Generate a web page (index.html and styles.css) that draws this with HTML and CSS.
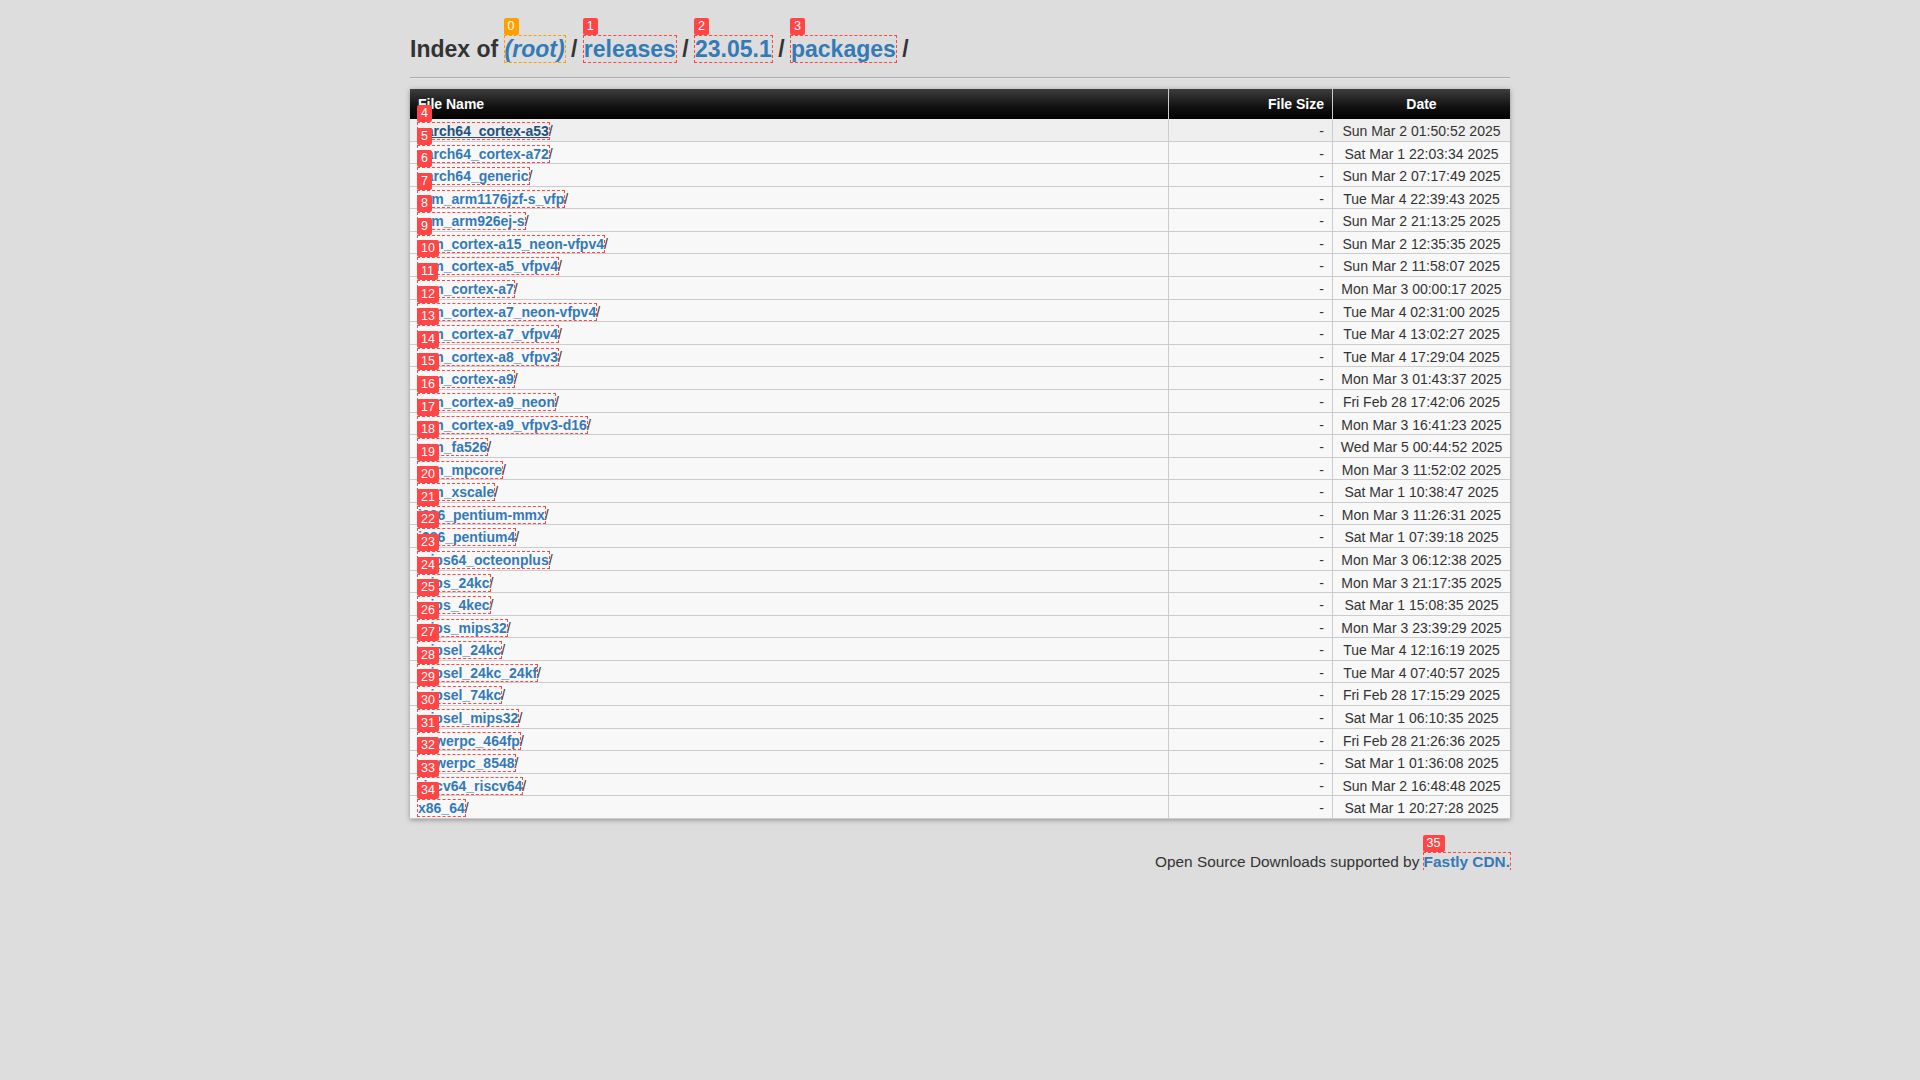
FILE: index.html
```html
<!DOCTYPE html>
<html lang="en">
<head>
<meta charset="utf-8">
<title>Index of /releases/23.05.1/packages/</title>
<link rel="stylesheet" href="styles.css">
</head>
<body>
<div class="page">
  <h1 class="title">Index of <span class="mk"><a class="crumb root mk-orange" href="#">(root)</a><span class="badge badge-orange">0</span></span> / <span class="mk"><a class="crumb" href="#">releases</a><span class="badge">1</span></span> / <span class="mk"><a class="crumb" href="#">23.05.1</a><span class="badge">2</span></span> / <span class="mk"><a class="crumb" href="#">packages</a><span class="badge">3</span></span> /</h1>
  <hr class="rule">
  <table class="listing">
    <colgroup><col class="c-name"><col class="c-size"><col class="c-date"></colgroup>
    <thead>
      <tr><th class="n">File Name</th><th class="s">File Size</th><th class="d">Date</th></tr>
    </thead>
    <tbody>
      <tr class="hover"><td class="n"><span class="mk"><a href="#">aarch64_cortex-a53</a><span class="badge">4</span></span>/</td><td class="s">-</td><td class="d">Sun Mar 2 01:50:52 2025</td></tr>
      <tr><td class="n"><span class="mk"><a href="#">aarch64_cortex-a72</a><span class="badge">5</span></span>/</td><td class="s">-</td><td class="d">Sat Mar 1 22:03:34 2025</td></tr>
      <tr><td class="n"><span class="mk"><a href="#">aarch64_generic</a><span class="badge">6</span></span>/</td><td class="s">-</td><td class="d">Sun Mar 2 07:17:49 2025</td></tr>
      <tr><td class="n"><span class="mk"><a href="#">arm_arm1176jzf-s_vfp</a><span class="badge">7</span></span>/</td><td class="s">-</td><td class="d">Tue Mar 4 22:39:43 2025</td></tr>
      <tr><td class="n"><span class="mk"><a href="#">arm_arm926ej-s</a><span class="badge">8</span></span>/</td><td class="s">-</td><td class="d">Sun Mar 2 21:13:25 2025</td></tr>
      <tr><td class="n"><span class="mk"><a href="#">arm_cortex-a15_neon-vfpv4</a><span class="badge">9</span></span>/</td><td class="s">-</td><td class="d">Sun Mar 2 12:35:35 2025</td></tr>
      <tr><td class="n"><span class="mk"><a href="#">arm_cortex-a5_vfpv4</a><span class="badge">10</span></span>/</td><td class="s">-</td><td class="d">Sun Mar 2 11:58:07 2025</td></tr>
      <tr><td class="n"><span class="mk"><a href="#">arm_cortex-a7</a><span class="badge">11</span></span>/</td><td class="s">-</td><td class="d">Mon Mar 3 00:00:17 2025</td></tr>
      <tr><td class="n"><span class="mk"><a href="#">arm_cortex-a7_neon-vfpv4</a><span class="badge">12</span></span>/</td><td class="s">-</td><td class="d">Tue Mar 4 02:31:00 2025</td></tr>
      <tr><td class="n"><span class="mk"><a href="#">arm_cortex-a7_vfpv4</a><span class="badge">13</span></span>/</td><td class="s">-</td><td class="d">Tue Mar 4 13:02:27 2025</td></tr>
      <tr><td class="n"><span class="mk"><a href="#">arm_cortex-a8_vfpv3</a><span class="badge">14</span></span>/</td><td class="s">-</td><td class="d">Tue Mar 4 17:29:04 2025</td></tr>
      <tr><td class="n"><span class="mk"><a href="#">arm_cortex-a9</a><span class="badge">15</span></span>/</td><td class="s">-</td><td class="d">Mon Mar 3 01:43:37 2025</td></tr>
      <tr><td class="n"><span class="mk"><a href="#">arm_cortex-a9_neon</a><span class="badge">16</span></span>/</td><td class="s">-</td><td class="d">Fri Feb 28 17:42:06 2025</td></tr>
      <tr><td class="n"><span class="mk"><a href="#">arm_cortex-a9_vfpv3-d16</a><span class="badge">17</span></span>/</td><td class="s">-</td><td class="d">Mon Mar 3 16:41:23 2025</td></tr>
      <tr><td class="n"><span class="mk"><a href="#">arm_fa526</a><span class="badge">18</span></span>/</td><td class="s">-</td><td class="d">Wed Mar 5 00:44:52 2025</td></tr>
      <tr><td class="n"><span class="mk"><a href="#">arm_mpcore</a><span class="badge">19</span></span>/</td><td class="s">-</td><td class="d">Mon Mar 3 11:52:02 2025</td></tr>
      <tr><td class="n"><span class="mk"><a href="#">arm_xscale</a><span class="badge">20</span></span>/</td><td class="s">-</td><td class="d">Sat Mar 1 10:38:47 2025</td></tr>
      <tr><td class="n"><span class="mk"><a href="#">i386_pentium-mmx</a><span class="badge">21</span></span>/</td><td class="s">-</td><td class="d">Mon Mar 3 11:26:31 2025</td></tr>
      <tr><td class="n"><span class="mk"><a href="#">i386_pentium4</a><span class="badge">22</span></span>/</td><td class="s">-</td><td class="d">Sat Mar 1 07:39:18 2025</td></tr>
      <tr><td class="n"><span class="mk"><a href="#">mips64_octeonplus</a><span class="badge">23</span></span>/</td><td class="s">-</td><td class="d">Mon Mar 3 06:12:38 2025</td></tr>
      <tr><td class="n"><span class="mk"><a href="#">mips_24kc</a><span class="badge">24</span></span>/</td><td class="s">-</td><td class="d">Mon Mar 3 21:17:35 2025</td></tr>
      <tr><td class="n"><span class="mk"><a href="#">mips_4kec</a><span class="badge">25</span></span>/</td><td class="s">-</td><td class="d">Sat Mar 1 15:08:35 2025</td></tr>
      <tr><td class="n"><span class="mk"><a href="#">mips_mips32</a><span class="badge">26</span></span>/</td><td class="s">-</td><td class="d">Mon Mar 3 23:39:29 2025</td></tr>
      <tr><td class="n"><span class="mk"><a href="#">mipsel_24kc</a><span class="badge">27</span></span>/</td><td class="s">-</td><td class="d">Tue Mar 4 12:16:19 2025</td></tr>
      <tr><td class="n"><span class="mk"><a href="#">mipsel_24kc_24kf</a><span class="badge">28</span></span>/</td><td class="s">-</td><td class="d">Tue Mar 4 07:40:57 2025</td></tr>
      <tr><td class="n"><span class="mk"><a href="#">mipsel_74kc</a><span class="badge">29</span></span>/</td><td class="s">-</td><td class="d">Fri Feb 28 17:15:29 2025</td></tr>
      <tr><td class="n"><span class="mk"><a href="#">mipsel_mips32</a><span class="badge">30</span></span>/</td><td class="s">-</td><td class="d">Sat Mar 1 06:10:35 2025</td></tr>
      <tr><td class="n"><span class="mk"><a href="#">powerpc_464fp</a><span class="badge">31</span></span>/</td><td class="s">-</td><td class="d">Fri Feb 28 21:26:36 2025</td></tr>
      <tr><td class="n"><span class="mk"><a href="#">powerpc_8548</a><span class="badge">32</span></span>/</td><td class="s">-</td><td class="d">Sat Mar 1 01:36:08 2025</td></tr>
      <tr><td class="n"><span class="mk"><a href="#">riscv64_riscv64</a><span class="badge">33</span></span>/</td><td class="s">-</td><td class="d">Sun Mar 2 16:48:48 2025</td></tr>
      <tr><td class="n"><span class="mk"><a href="#">x86_64</a><span class="badge">34</span></span>/</td><td class="s">-</td><td class="d">Sat Mar 1 20:27:28 2025</td></tr>
    </tbody>
  </table>
  <p class="footer">Open Source Downloads supported by <span class="mk"><a class="fastly" href="#">Fastly CDN.</a><span class="badge">35</span></span></p>
</div>
</body>
</html>
```
FILE: styles.css
```css
html, body {
  margin: 0;
  padding: 0;
}
body {
  background: #dddddd;
  color: #333333;
  font-family: "Liberation Sans", Arial, sans-serif;
  font-size: 14px;
}
.page {
  width: 1100px;
  margin: 0 auto;
  padding-top: 36px;
}
.title {
  margin: 0;
  height: 26px;
  font-size: 23px;
  font-weight: bold;
  line-height: 26px;
  color: #333333;
}
.crumb {
  color: #337ab7;
  text-decoration: none;
}
.root {
  font-style: italic;
}
.mk {
  position: relative;
}
.mk a {
  outline: 1px dashed #ff4545;
}
.mk a.mk-orange {
  outline-color: #ffa000;
}
.badge {
  position: absolute;
  left: -1px;
  bottom: calc(100% + 1px);
  z-index: 10;
  height: 17px;
  padding: 0 4px;
  background: #ff4545;
  color: #ffffff;
  font-family: "Liberation Sans", Arial, sans-serif;
  font-size: 12.5px;
  font-weight: normal;
  font-style: normal;
  line-height: 17px;
  white-space: nowrap;
  border-radius: 2px;
}
.badge-orange {
  background: #ffa000;
}
.rule {
  margin: 15px 0 10px;
  height: 0;
  border: 0;
  border-top: 1px solid #aaaaaa;
  border-bottom: 1px solid #e8e8e8;
}
.listing {
  width: 100%;
  table-layout: fixed;
  border-collapse: separate;
  border-spacing: 0;
  background: #f8f8f8;
  box-shadow: 0 1px 5px rgba(0, 0, 0, 0.35);
}
.c-size { width: 164px; }
.c-date { width: 178px; }
.listing th {
  height: 30px;
  padding: 0 8px;
  line-height: 30px;
  background: linear-gradient(to bottom, #3d3d3d 0%, #111111 60%, #000000 100%);
  color: #ffffff;
  font-weight: bold;
  font-size: 14px;
  box-sizing: border-box;
}
.listing td {
  padding: 3px 8px 0;
  line-height: 18.58px;
  border-bottom: 1px solid #cccccc;
  white-space: nowrap;
  color: #333333;
}
.listing .n { text-align: left; }
.listing .s { text-align: right; border-left: 1px solid #cccccc; }
.listing .d { text-align: center; border-left: 1px solid #cccccc; padding-left: 4px; padding-right: 4px; }
.listing td.n a {
  color: #337ab7;
  font-weight: bold;
  text-decoration: none;
}
.listing tr.hover td {
  background: #efefef;
}
.listing tr.hover td.n a {
  color: #23527c;
  text-decoration: underline;
}
.footer {
  margin: 34px 0 0;
  text-align: right;
  font-size: 15.4px;
  line-height: 17px;
  color: #333333;
}
.fastly {
  color: #337ab7;
  font-weight: bold;
  text-decoration: none;
}
```
